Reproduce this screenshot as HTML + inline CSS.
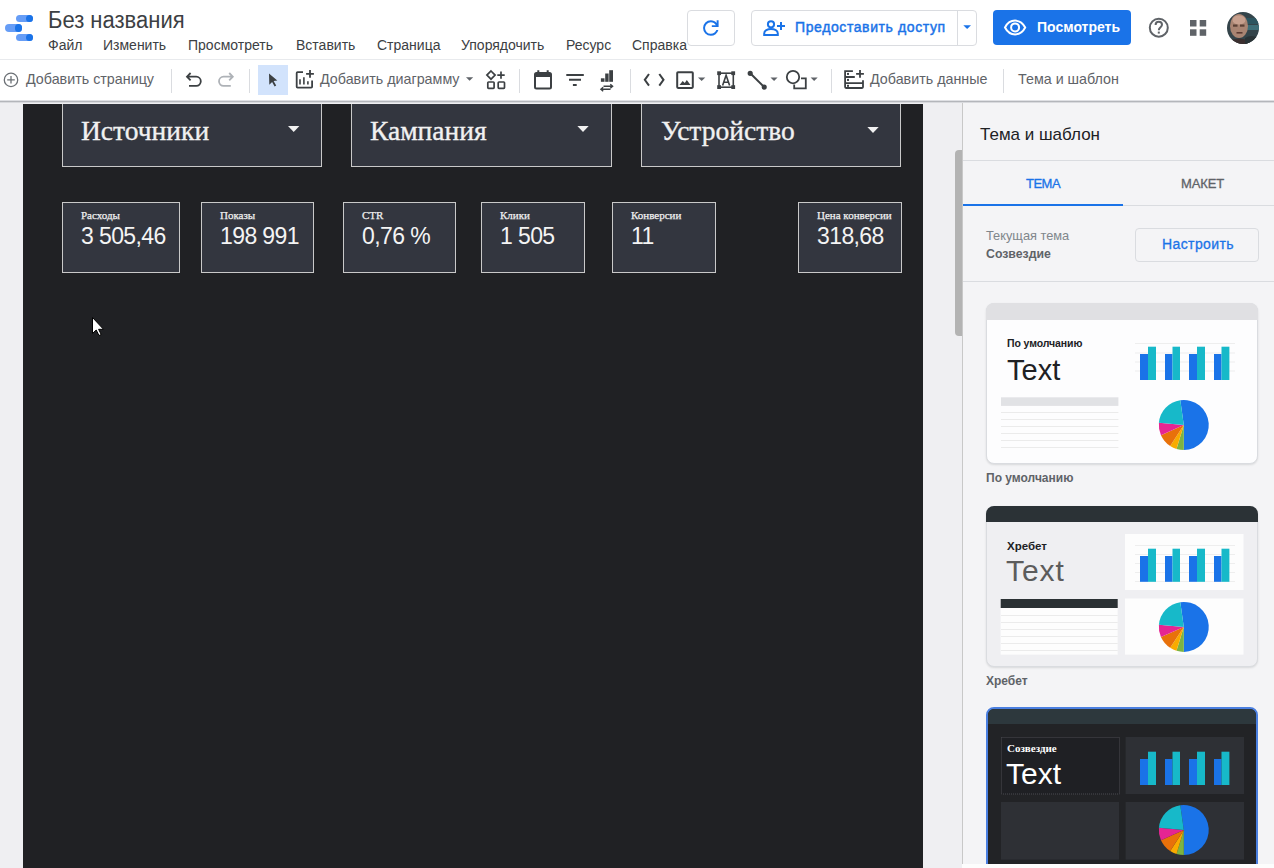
<!DOCTYPE html>
<html><head><meta charset="utf-8">
<style>
*{box-sizing:border-box;margin:0;padding:0}
html,body{width:1274px;height:868px;overflow:hidden;background:#fff;font-family:"Liberation Sans",sans-serif;position:relative}
.a{position:absolute}
.t{position:absolute;white-space:nowrap;line-height:1}
svg{position:absolute;overflow:visible}
</style></head><body>
<!-- HEADER -->
<div class="a" style="left:0;top:0;width:1274px;height:59px;background:#fff"></div>
<!-- logo -->
<div class="a" style="left:16px;top:15px;width:17px;height:7px;border-radius:4px;background:#669df6"></div>
<div class="a" style="left:26px;top:15px;width:7px;height:7px;border-radius:4px;background:#1a73e8"></div>
<div class="a" style="left:5px;top:24px;width:17px;height:8px;border-radius:4px;background:#669df6"></div>
<div class="a" style="left:15px;top:24px;width:7px;height:8px;border-radius:4px;background:#1a73e8"></div>
<div class="a" style="left:16px;top:34px;width:17px;height:7px;border-radius:4px;background:#669df6"></div>
<div class="a" style="left:26px;top:34px;width:7px;height:7px;border-radius:4px;background:#1a73e8"></div>
<div class="t" style="left:48px;top:9px;font-size:23px;color:#3c4043;transform:scaleX(0.956);transform-origin:0 0">Без названия</div>
<div class="t" id="menu" style="left:48px;top:38px;font-size:14px;color:#3c4043">
<span class="a" style="left:0">Файл</span><span class="a" style="left:55px">Изменить</span><span class="a" style="left:140px">Просмотреть</span><span class="a" style="left:248px">Вставить</span><span class="a" style="left:329px">Страница</span><span class="a" style="left:413px">Упорядочить</span><span class="a" style="left:518px">Ресурс</span><span class="a" style="left:584px">Справка</span>
</div>
<!-- refresh btn -->
<div class="a" style="left:687px;top:10px;width:48px;height:36px;border:1px solid #dadce0;border-radius:4px"></div>
<!-- share btn -->
<div class="a" style="left:751px;top:10px;width:226px;height:36px;border:1px solid #dadce0;border-radius:4px"></div>
<div class="a" style="left:957px;top:11px;width:1px;height:34px;background:#dadce0"></div>
<div class="t" style="left:795px;top:20px;font-size:14px;color:#1a73e8;-webkit-text-stroke:0.45px #1a73e8;letter-spacing:0.6px">Предоставить доступ</div>
<!-- view btn -->
<div class="a" style="left:993px;top:10px;width:138px;height:35px;background:#1a73e8;border-radius:4px"></div>
<div class="t" style="left:1037px;top:20px;font-size:14px;font-weight:bold;color:#fff">Посмотреть</div>
<!-- avatar -->
<svg class="a" style="left:1227px;top:12px" width="32" height="32" viewBox="0 0 32 32">
<defs><clipPath id="av"><circle cx="16" cy="16" r="16"/></clipPath></defs>
<g clip-path="url(#av)">
<rect width="32" height="32" fill="#34444a"/>
<rect x="18" y="6" width="14" height="6" fill="#2d5560"/>
<rect x="20" y="13" width="12" height="5" fill="#3e6e78"/>
<ellipse cx="12" cy="14" rx="9" ry="12" fill="#a98472"/>
<ellipse cx="12" cy="8" rx="6.5" ry="4.5" fill="#c7a08e"/>
<rect x="6" y="12.5" width="4.5" height="2.2" fill="#5b4035"/>
<rect x="13" y="12.5" width="4.5" height="2.2" fill="#5b4035"/>
<rect x="9.5" y="20" width="6" height="1.6" fill="#5b3a32"/>
<path d="M0,30 Q10,24 20,28 L24,32 H0 Z" fill="#3b2f2f"/>
<path d="M18,26 Q24,22 32,26 V32 H18 Z" fill="#2a3336"/>
</g>
</svg>
<!-- header divider -->
<div class="a" style="left:0;top:59px;width:1274px;height:1px;background:#e8eaed"></div>

<!-- TOOLBAR -->
<div class="t" style="left:26px;top:72px;font-size:14.3px;color:#5f6368">Добавить страницу</div>
<div class="t" style="left:320px;top:72px;font-size:14.3px;color:#5f6368">Добавить диаграмму</div>
<div class="t" style="left:870px;top:72px;font-size:14.3px;color:#5f6368">Добавить данные</div>
<div class="t" style="left:1018px;top:72px;font-size:14.3px;color:#5f6368">Тема и шаблон</div>
<div class="a" style="left:171px;top:69px;width:1px;height:24px;background:#dadce0"></div>
<div class="a" style="left:249px;top:69px;width:1px;height:24px;background:#dadce0"></div>
<div class="a" style="left:519px;top:69px;width:1px;height:24px;background:#dadce0"></div>
<div class="a" style="left:630px;top:69px;width:1px;height:24px;background:#dadce0"></div>
<div class="a" style="left:831px;top:69px;width:1px;height:24px;background:#dadce0"></div>
<div class="a" style="left:1003px;top:69px;width:1px;height:24px;background:#dadce0"></div>
<div class="a" style="left:258px;top:65px;width:30px;height:30px;background:#d2e3fc"></div>

<svg class="a" style="left:0;top:0" width="1274" height="102" viewBox="0 0 1274 102">
<g fill="none" stroke="#1a73e8" stroke-width="2">
 </g>
<path transform="translate(699.2,16.4) scale(0.97)" fill="#1a73e8" d="M12 20q-3.35 0-5.675-2.325Q4 15.35 4 12q0-3.350 2.325-5.675Q8.65 4 12 4q1.725 0 3.3.713 1.575.712 2.7 2.037V4h2v7h-7V9h4.2q-.8-1.4-2.187-2.2Q13.625 6 12 6 9.5 6 7.75 7.75T6 12q0 2.5 1.75 4.25T12 18q1.925 0 3.475-1.1T17.65 14h2.1q-.7 2.65-2.85 4.325Q14.75 20 12 20Z"/>
<g fill="none" stroke="#1a73e8" stroke-width="2">
 <circle cx="771" cy="24.3" r="3.1"/>
 <path d="M764.2,35 V33.5 C764.2,30.6 767.5,29 771,29 C774.5,29 777.8,30.6 777.8,33.5 V35 Z"/>
 <path d="M777,26 H785 M781,22 V30"/>
</g>
<path d="M963.3,25.2 H971 L967.15,28.9 Z" fill="#1a73e8"/>
<g fill="none" stroke="#fff" stroke-width="2">
 <path d="M1005,27.5 C1007.5,22.7 1011,20.6 1015.1,20.6 C1019.2,20.6 1022.7,22.7 1025.2,27.5 C1022.7,32.3 1019.2,34.4 1015.1,34.4 C1011,34.4 1007.5,32.3 1005,27.5 Z"/>
 <circle cx="1015.1" cy="27.4" r="4"/>
</g>
<g fill="none" stroke="#5f6368" stroke-width="2">
 <circle cx="1158.8" cy="27.7" r="9"/>
</g>
<path d="M1155.6,25 C1155.6,23 1157,21.8 1158.8,21.8 C1160.6,21.8 1162,23 1162,24.8 C1162,27.2 1158.8,27.2 1158.8,30.2" fill="none" stroke="#5f6368" stroke-width="2"/>
<rect x="1157.8" y="31.6" width="2" height="2" fill="#5f6368"/>
<g fill="#5f6368">
 <rect x="1190" y="20" width="6.5" height="6.5"/><rect x="1199.7" y="20" width="6.5" height="6.5"/>
 <rect x="1190" y="29.3" width="6.5" height="6.5"/><rect x="1199.7" y="29.3" width="6.5" height="6.5"/>
</g>
<!-- toolbar icons -->
<g fill="none" stroke="#6b7075" stroke-width="1.3">
 <circle cx="11" cy="79.9" r="6.7"/>
 <path d="M11,76.1 V83.6 M7.2,79.9 H14.8"/>
</g>
<g fill="none" stroke="#3c4043" stroke-width="1.8">
 <path d="M190.6,73 L187,76.7 L190.6,80.4 M187.3,76.7 H196.2 A4.6,4.6 0 0 1 196.2,85.9 H189"/>
</g>
<g fill="none" stroke="#aeb2b7" stroke-width="1.8">
 <path d="M229.2,73 L232.8,76.7 L229.2,80.4 M232.5,76.7 H223.6 A4.6,4.6 0 0 0 223.6,85.9 H230.8"/>
</g>
<path d="M269,73.5 L277.3,80.6 L273.6,81.1 L276.2,85.6 L274.6,86.5 L272.1,81.9 L269.3,84.7 Z" fill="#3c4043"/>
<g fill="none" stroke="#3c4043" stroke-width="2">
 <path d="M303,72.1 H297.6 Q296.7,72.1 296.7,73 V86.8 Q296.7,87.7 297.6,87.7 H311.2 Q312.1,87.7 312.1,86.8 V80.4" stroke-width="1.8"/>
 <path d="M306.1,73.9 H313.9 M310,70.1 V77.7" stroke-width="1.8"/>
 <path d="M300,84.6 V79.2 M303.9,84.6 V77.3 M307.9,84.6 V81.2" stroke-width="1.6"/>
</g>
<path d="M466,77.2 H473.2 L469.6,80.8 Z" fill="#5f6368"/>
<g fill="none" stroke="#3c4043" stroke-width="1.7">
 <path d="M491,71 L495.1,75.1 L491,79.2 L486.9,75.1 Z"/>
 <path d="M497.3,75.1 H504.7 M501,71.4 V78.8"/>
 <rect x="487.8" y="82" width="6.3" height="6.3" rx="0.8"/>
 <rect x="498.2" y="82" width="6.3" height="6.3" rx="0.8"/>
</g>
<g fill="none" stroke="#3c4043" stroke-width="2">
 <rect x="535" y="73" width="16" height="15.5" rx="1.5"/>
 <path d="M538.3,70.2 V73.5 M547.7,70.2 V73.5"/>
</g>
<rect x="535" y="73" width="16" height="4" fill="#3c4043"/>
<g fill="none" stroke="#3c4043" stroke-width="2">
 <path d="M566.3,75 H583.8 M569,79.8 H581 M572.9,84.9 H576.7"/>
</g>
<g fill="#3c4043">
 <rect x="600.9" y="78.3" width="3.6" height="3.5"/>
 <rect x="605.2" y="73.5" width="3.4" height="8.3"/>
 <rect x="609.2" y="70.2" width="3.8" height="11.6"/>
</g>
<g fill="none" stroke="#3c4043" stroke-width="1.4">
 <path d="M603.5,86.3 H612.5 M610.3,84.3 L612.6,86.3 L610.3,88.3"/>
 <path d="M610.5,89.3 H601 M603.2,87.3 L600.9,89.3 L603.2,91.3"/>
</g>
<g fill="none" stroke="#3c4043" stroke-width="2">
 <path d="M649,74 L644.8,79.8 L649,85.6 M659.3,74 L663.5,79.8 L659.3,85.6"/>
 <rect x="677.2" y="72.3" width="15.6" height="15.6" rx="0.8"/>
</g>
<path d="M679.5,85 L682.7,81 L684.8,83 L686.8,80 L690.5,85 Z" fill="#3c4043"/>
<path d="M698,77.4 H705.3 L701.65,80.9 Z" fill="#5f6368"/>
<g fill="none" stroke="#3c4043" stroke-width="1.6">
 <rect x="719" y="73.2" width="14.3" height="14"/>
 <path d="M722.6,85.6 L726.1,75.3 L729.6,85.6 M723.6,82.3 H728.6"/>
</g>
<g fill="#3c4043">
 <rect x="717.2" y="71.3" width="3.8" height="3.8"/><rect x="731.3" y="71.3" width="3.8" height="3.8"/>
 <rect x="717.2" y="85.2" width="3.8" height="3.8"/><rect x="731.3" y="85.2" width="3.8" height="3.8"/>
</g>
<g stroke="#3c4043" stroke-width="2" fill="#3c4043">
 <path d="M750.2,73.3 L764.2,87.1"/>
 <circle cx="750.2" cy="73.3" r="1.6"/><circle cx="764.2" cy="87.1" r="1.6"/>
</g>
<path d="M770.5,77.4 H777.6 L774.05,80.9 Z" fill="#5f6368"/>
<g fill="none" stroke="#3c4043" stroke-width="1.8">
 <circle cx="793" cy="77.1" r="6.2"/>
 <path d="M801,78.4 H805.8 V88.4 H794.2 V84.6"/>
</g>
<path d="M810.6,77.4 H817.7 L814.15,80.9 Z" fill="#5f6368"/>
<g fill="none" stroke="#3c4043" stroke-width="1.8">
 <path d="M852.9,71.1 H845.1 V87.1 Q845.1,88 846,88 H862.1 Q863,88 863,87.1 V80.3 M845.1,77 H854.8 M845.1,83.1 H863"/>
 <path d="M856.1,73.9 H863.9 M860,70.1 V77.7"/>
</g>
<g fill="#3c4043">
 <rect x="847" y="72.9" width="2" height="2"/><rect x="847" y="78.9" width="2" height="2"/><rect x="847" y="84.8" width="2" height="2"/>
</g>
</svg>

<!-- toolbar bottom -->
<div class="a" style="left:0;top:100px;width:1274px;height:1px;background:#dfe0e4"></div><div class="a" style="left:0;top:101px;width:1274px;height:1px;background:#b4b6bb"></div><div class="a" style="left:0;top:102px;width:1274px;height:1px;background:#d9dade"></div>

<!-- WORKSPACE -->
<div class="a" style="left:0;top:103px;width:962px;height:765px;background:#efeff2"></div>
<div class="a" id="canvas" style="left:23px;top:104px;width:900px;height:764px;background:#202124;overflow:hidden"><div class="a" style="left:0;top:-1px;width:900px;height:765px">
<style>
.dd{position:absolute;top:-20px;height:84px;background:#33363f;border:1px solid #c9c9c9}
.dt{position:absolute;top:33px;font-family:"Liberation Serif",serif;font-size:27.5px;color:#f1f1f1;-webkit-text-stroke:0.35px #f1f1f1;white-space:nowrap;line-height:1}
.sc{position:absolute;top:99px;height:71px;background:#33363f;border:1px solid #c9c9c9}
.sl{position:absolute;left:18px;top:7px;font-family:"Liberation Serif",serif;font-size:11px;color:#f0f0f0;-webkit-text-stroke:0.25px #f0f0f0;white-space:nowrap;line-height:1}
.sv{position:absolute;left:18px;top:22px;font-size:23px;color:#f4f4f4;white-space:nowrap;line-height:1;letter-spacing:-0.6px}
</style>
<div class="dd" style="left:39px;width:260px"><div class="dt" style="left:18px">Источники</div></div>
<div class="dd" style="left:328px;width:261px"><div class="dt" style="left:18px">Кампания</div></div>
<div class="dd" style="left:618px;width:260px"><div class="dt" style="left:19px">Устройство</div></div>
<svg style="left:0;top:0" width="899" height="765">
<path d="M265,23 H276.4 L270.7,29 Z" fill="#f1f1f1"/>
<path d="M554.4,23 H565.7 L560,29 Z" fill="#f1f1f1"/>
<path d="M844.4,24 H855.7 L850,30 Z" fill="#f1f1f1"/>
<path d="M69.5,214.5 V230.5 L73.2,227 L76,232.5 L78.2,231.5 L75.6,226.3 L80.5,226.3 Z" fill="#fff" stroke="#000" stroke-width="1"/>
</svg>
<div class="sc" style="left:39px;width:118px"><div class="sl">Расходы</div><div class="sv">3 505,46</div></div>
<div class="sc" style="left:178px;width:113px"><div class="sl">Показы</div><div class="sv">198 991</div></div>
<div class="sc" style="left:320px;width:113px"><div class="sl">CTR</div><div class="sv">0,76 %</div></div>
<div class="sc" style="left:458px;width:104px"><div class="sl">Клики</div><div class="sv">1 505</div></div>
<div class="sc" style="left:589px;width:104px"><div class="sl">Конверсии</div><div class="sv">11</div></div>
<div class="sc" style="left:775px;width:104px"><div class="sl">Цена конверсии</div><div class="sv">318,68</div></div>
</div>
</div>
<!-- scrollbar -->
<div class="a" style="left:955px;top:150px;width:7px;height:186px;background:#b3b3b3;border-radius:4px 0 0 4px"></div>

<!-- PANEL -->
<div class="a" id="panel" style="left:962px;top:103px;width:312px;height:765px;background:#f4f4f6;overflow:hidden">
<div class="a" style="left:0;top:0;width:1px;height:766px;background:#c8c8c8"></div>
<div class="t" style="left:18px;top:23px;font-size:17px;color:#202124">Тема и шаблон</div>
<div class="a" style="left:1px;top:57px;width:312px;height:1px;background:#dadce0"></div>
<div class="t" style="left:64px;top:74px;font-size:13px;color:#1a73e8;letter-spacing:-0.5px;-webkit-text-stroke:0.3px #1a73e8">ТЕМА</div>
<div class="t" style="left:219px;top:74px;font-size:13px;color:#5f6368;letter-spacing:-0.1px;-webkit-text-stroke:0.3px #5f6368">МАКЕТ</div>
<div class="a" style="left:1px;top:102px;width:312px;height:1px;background:#dadce0"></div>
<div class="a" style="left:1px;top:101px;width:160px;height:2px;background:#1a73e8"></div>
<div class="t" style="left:24px;top:127px;font-size:12.8px;color:#80868b">Текущая тема</div>
<div class="t" style="left:24px;top:145px;font-size:12.3px;font-weight:bold;color:#5f6368">Созвездие</div>
<div class="a" style="left:173px;top:125px;width:124px;height:34px;border:1px solid #dadce0;border-radius:4px;background:transparent"></div>
<div class="t" style="left:200px;top:134px;font-size:14px;color:#1a73e8;letter-spacing:0.4px;-webkit-text-stroke:0.3px #1a73e8">Настроить</div>
<div class="a" style="left:1px;top:178px;width:312px;height:1px;background:#dadce0"></div>
<div class="a" style="left:24px;top:200px;width:272px;height:161px;border-radius:8px;background:#fdfdfe;border:1px solid #dadce0;box-shadow:0 1px 2px rgba(60,64,67,.15)"><div class="a" style="left:-1px;top:-1px;width:272px;height:17px;background:#e0e0e3;border-radius:8px 8px 0 0"></div></div>
<svg style="left:24px;top:200px" width="272" height="161"><rect x="149" y="40" width="100" height="1" fill="#eeeeee"/><rect x="149" y="49.5" width="100" height="1" fill="#eeeeee"/><rect x="149" y="58.5" width="100" height="1" fill="#eeeeee"/><rect x="149" y="67.5" width="100" height="1" fill="#eeeeee"/><rect x="154" y="51" width="8" height="26" fill="#1a73e8"/><rect x="162" y="43.7" width="8" height="33.3" fill="#17b9c9"/><rect x="179" y="51" width="7.5" height="26" fill="#1a73e8"/><rect x="186.5" y="43.7" width="7.5" height="33.3" fill="#17b9c9"/><rect x="203" y="51" width="8" height="26" fill="#1a73e8"/><rect x="211" y="43.7" width="8" height="33.3" fill="#17b9c9"/><rect x="228" y="51" width="7.5" height="26" fill="#1a73e8"/><rect x="235.5" y="43.7" width="7.900000000000006" height="33.3" fill="#17b9c9"/><rect x="15" y="94.3" width="117.4" height="8.6" fill="#e1e2e5"/><rect x="15" y="109" width="117.4" height="1" fill="#ebebeb"/><rect x="15" y="116" width="117.4" height="1" fill="#ebebeb"/><rect x="15" y="123" width="117.4" height="1" fill="#ebebeb"/><rect x="15" y="130" width="117.4" height="1" fill="#ebebeb"/><rect x="15" y="137" width="117.4" height="1" fill="#ebebeb"/><rect x="15" y="144" width="117.4" height="1" fill="#ebebeb"/><path d="M197.8,122 L194.32,97.24 A25,25 0 1 1 197.80,147.00 Z" fill="#1a73e8"/><path d="M197.8,122 L197.80,147.00 A25,25 0 0 1 190.49,145.91 Z" fill="#7cb342"/><path d="M197.8,122 L190.49,145.91 A25,25 0 0 1 184.18,142.97 Z" fill="#f9ab00"/><path d="M197.8,122 L184.18,142.97 A25,25 0 0 1 174.96,132.17 Z" fill="#e8710a"/><path d="M197.8,122 L174.96,132.17 A25,25 0 0 1 172.90,119.82 Z" fill="#e52592"/><path d="M197.8,122 L172.90,119.82 A25,25 0 0 1 194.32,97.24 Z" fill="#17b9c9"/></svg>
<div class="t" style="left:45px;top:235px;font-size:10.5px;font-weight:bold;color:#202124;letter-spacing:-0.1px">По умолчанию</div>
<div class="t" style="left:45px;top:253px;font-size:29px;color:#202124">Text</div>
<div class="t" style="left:24px;top:369px;font-size:12px;font-weight:bold;color:#5f6368">По умолчанию</div>
<div class="a" style="left:24px;top:403px;width:272px;height:161px;border-radius:8px;background:#efeff2;border:1px solid #dadce0;box-shadow:0 1px 2px rgba(60,64,67,.15)"><div class="a" style="left:-1px;top:-1px;width:272px;height:16px;background:#2b3236;border-radius:8px 8px 0 0"></div></div>
<svg style="left:24px;top:403px" width="272" height="161"><rect x="139" y="28" width="118.5" height="56" fill="#fdfdfd"/><rect x="139" y="92.5" width="118.5" height="56.2" fill="#fdfdfd"/><rect x="14.7" y="102" width="117" height="46.7" fill="#fdfdfd"/><rect x="14.7" y="93" width="117" height="9" fill="#2b3134"/><rect x="149" y="39" width="100" height="1" fill="#eeeeee"/><rect x="149" y="48" width="100" height="1" fill="#eeeeee"/><rect x="149" y="57" width="100" height="1" fill="#eeeeee"/><rect x="149" y="66" width="100" height="1" fill="#eeeeee"/><rect x="149" y="75" width="100" height="1" fill="#eeeeee"/><rect x="154" y="50" width="8" height="25.799999999999997" fill="#1a73e8"/><rect x="162" y="42.7" width="8" height="33.099999999999994" fill="#17b9c9"/><rect x="179" y="50" width="7.5" height="25.799999999999997" fill="#1a73e8"/><rect x="186.5" y="42.7" width="7.5" height="33.099999999999994" fill="#17b9c9"/><rect x="203" y="50" width="8" height="25.799999999999997" fill="#1a73e8"/><rect x="211" y="42.7" width="8" height="33.099999999999994" fill="#17b9c9"/><rect x="228" y="50" width="7.5" height="25.799999999999997" fill="#1a73e8"/><rect x="235.5" y="42.7" width="7.900000000000006" height="33.099999999999994" fill="#17b9c9"/><rect x="15" y="109" width="116.69999999999999" height="1" fill="#ebebeb"/><rect x="15" y="116" width="116.69999999999999" height="1" fill="#ebebeb"/><rect x="15" y="123" width="116.69999999999999" height="1" fill="#ebebeb"/><rect x="15" y="130" width="116.69999999999999" height="1" fill="#ebebeb"/><rect x="15" y="137" width="116.69999999999999" height="1" fill="#ebebeb"/><rect x="15" y="144" width="116.69999999999999" height="1" fill="#ebebeb"/><path d="M197.8,120.9 L194.32,96.14 A25,25 0 1 1 197.80,145.90 Z" fill="#1a73e8"/><path d="M197.8,120.9 L197.80,145.90 A25,25 0 0 1 190.49,144.81 Z" fill="#7cb342"/><path d="M197.8,120.9 L190.49,144.81 A25,25 0 0 1 184.18,141.87 Z" fill="#f9ab00"/><path d="M197.8,120.9 L184.18,141.87 A25,25 0 0 1 174.96,131.07 Z" fill="#e8710a"/><path d="M197.8,120.9 L174.96,131.07 A25,25 0 0 1 172.90,118.72 Z" fill="#e52592"/><path d="M197.8,120.9 L172.90,118.72 A25,25 0 0 1 194.32,96.14 Z" fill="#17b9c9"/></svg>
<div class="t" style="left:45px;top:438px;font-size:11.5px;font-weight:bold;color:#202124">Хребет</div>
<div class="t" style="left:44px;top:453px;font-size:30px;color:#5c5c5c;letter-spacing:0.9px">Text</div>
<div class="t" style="left:24px;top:572px;font-size:12px;font-weight:bold;color:#5f6368">Хребет</div>
<div class="a" style="left:24px;top:604px;width:272px;height:170px;border-radius:8px;background:#222326;border:2px solid #4a7fe0;overflow:hidden"><div class="a" style="left:0;top:0;width:272px;height:15px;background:#2d383d"></div></div>
<svg style="left:24px;top:604px" width="272" height="170"><rect x="15.5" y="30.5" width="118" height="56.5" fill="#1f2024" stroke="#4a4a50" stroke-dasharray="1 1"/><rect x="139.6" y="30" width="118.4" height="57" fill="#2e3035"/><rect x="15" y="95" width="118" height="57.6" fill="#2e3035"/><rect x="139.6" y="95" width="118.4" height="57.6" fill="#2e3035"/><rect x="154" y="52" width="8" height="26" fill="#1a73e8"/><rect x="162" y="44.7" width="8" height="33.3" fill="#17b9c9"/><rect x="179" y="52" width="7.5" height="26" fill="#1a73e8"/><rect x="186.5" y="44.7" width="7.5" height="33.3" fill="#17b9c9"/><rect x="203" y="52" width="8" height="26" fill="#1a73e8"/><rect x="211" y="44.7" width="8" height="33.3" fill="#17b9c9"/><rect x="228" y="52" width="7.5" height="26" fill="#1a73e8"/><rect x="235.5" y="44.7" width="7.900000000000006" height="33.3" fill="#17b9c9"/><path d="M197.8,123 L194.32,98.24 A25,25 0 1 1 197.80,148.00 Z" fill="#1a73e8"/><path d="M197.8,123 L197.80,148.00 A25,25 0 0 1 190.49,146.91 Z" fill="#7cb342"/><path d="M197.8,123 L190.49,146.91 A25,25 0 0 1 184.18,143.97 Z" fill="#f9ab00"/><path d="M197.8,123 L184.18,143.97 A25,25 0 0 1 174.96,133.17 Z" fill="#e8710a"/><path d="M197.8,123 L174.96,133.17 A25,25 0 0 1 172.90,120.82 Z" fill="#e52592"/><path d="M197.8,123 L172.90,120.82 A25,25 0 0 1 194.32,98.24 Z" fill="#17b9c9"/></svg>
<div class="t" style="left:45px;top:640px;font-family:'Liberation Serif',serif;font-size:11px;font-weight:bold;color:#fff">Созвездие</div>
<div class="t" style="left:44px;top:656px;font-size:30px;color:#fff">Text</div>
<div class="a" style="left:0;top:761px;width:312px;height:4px;background:#fdfdfd"></div>
</div>
</body></html>
